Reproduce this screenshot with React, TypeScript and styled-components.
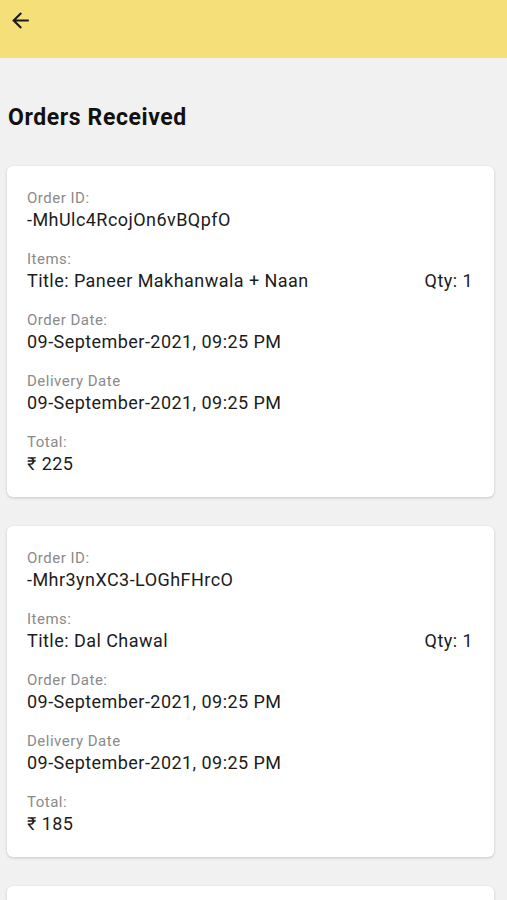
import React from "react";
import styled, { createGlobalStyle } from "styled-components";

type Order = {
  id: string;
  title: string;
  qty: number;
  orderDate: string;
  deliveryDate: string;
  total: number;
};

const orders: Order[] = [
  {
    id: "-MhUlc4RcojOn6vBQpfO",
    title: "Paneer Makhanwala + Naan",
    qty: 1,
    orderDate: "09-September-2021, 09:25 PM",
    deliveryDate: "09-September-2021, 09:25 PM",
    total: 225
  },
  {
    id: "-Mhr3ynXC3-LOGhFHrcO",
    title: "Dal Chawal",
    qty: 1,
    orderDate: "09-September-2021, 09:25 PM",
    deliveryDate: "09-September-2021, 09:25 PM",
    total: 185
  },
  {
    id: "-Mhr4aPq2LkT9sVwXyZa",
    title: "Veg Biryani",
    qty: 1,
    orderDate: "09-September-2021, 09:25 PM",
    deliveryDate: "09-September-2021, 09:25 PM",
    total: 160
  }
];

const BackArrow = () => (
  <svg width="25" height="25" viewBox="0 0 24 24">
    <path
      d="M20 11H7.83l5.59-5.59L12 4l-8 8 8 8 1.41-1.41L7.83 13H20v-2z"
      fill="#1a1a1a"
    />
  </svg>
);

const Field: React.FC<{ label: string; children: React.ReactNode }> = ({
  label,
  children
}) => (
  <FieldBox>
    <Label>{label}</Label>
    {children}
  </FieldBox>
);

const OrderCard: React.FC<{ order: Order }> = ({ order }) => (
  <Card>
    <Field label="Order ID:">
      <Value>{order.id}</Value>
    </Field>
    <Field label="Items:">
      <ItemRow>
        <Value>Title: {order.title}</Value>
        <Value>Qty: {order.qty}</Value>
      </ItemRow>
    </Field>
    <Field label="Order Date:">
      <Value>{order.orderDate}</Value>
    </Field>
    <Field label="Delivery Date">
      <Value>{order.deliveryDate}</Value>
    </Field>
    <Field label="Total:">
      <Value>₹ {order.total}</Value>
    </Field>
  </Card>
);

export default function App() {
  return (
    <>
      <GlobalStyle />
      <Page>
        <Header>
          <BackButton>
            <BackArrow />
          </BackButton>
        </Header>
        <Content>
          <Heading>Orders Received</Heading>
          <List>
            {orders.map((o) => (
              <OrderCard key={o.id} order={o} />
            ))}
          </List>
        </Content>
      </Page>
    </>
  );
}

const GlobalStyle = createGlobalStyle`
  html, body {
    margin: 0;
    padding: 0;
    background: #f1f1f1;
    font-family: Roboto, "Noto Sans", sans-serif;
  }
  body {
    height: 900px;
    overflow: hidden;
  }
`;

const Page = styled.div`
  width: 507px;
  height: 900px;
  overflow: hidden;
  background: #f1f1f1;
`;

const Header = styled.header`
  height: 58px;
  background: #f4df78;
  display: flex;
  align-items: flex-start;
  padding: 8px 0 0 8px;
  box-sizing: border-box;
`;

const BackButton = styled.button`
  border: 0;
  background: none;
  padding: 0;
  display: flex;
  cursor: pointer;
`;

const Content = styled.main`
  padding: 0 13px 0 7px;
`;

const Heading = styled.h1`
  margin: 0;
  padding: 46px 0 0 1px;
  height: 108px;
  box-sizing: border-box;
  font-size: 23px;
  line-height: 28px;
  letter-spacing: 0.6px;
  font-weight: 700;
  color: #111;
`;

const List = styled.div`
  display: flex;
  flex-direction: column;
  gap: 29px;
`;

const Card = styled.section`
  background: #fff;
  border-radius: 6px;
  box-shadow: 0 1px 3px rgba(0, 0, 0, 0.18);
  padding: 22px 21px 21px 20px;
  display: flex;
  flex-direction: column;
  gap: 17px;
`;

const FieldBox = styled.div`
  display: flex;
  flex-direction: column;
`;

const Label = styled.span`
  font-size: 15px;
  line-height: 20px;
  letter-spacing: 0.5px;
  color: #8a8a8a;
`;

const Value = styled.span`
  font-size: 18px;
  line-height: 24px;
  letter-spacing: 0.45px;
  color: #1c1c1c;
`;

const ItemRow = styled.div`
  display: flex;
  justify-content: space-between;
`;
